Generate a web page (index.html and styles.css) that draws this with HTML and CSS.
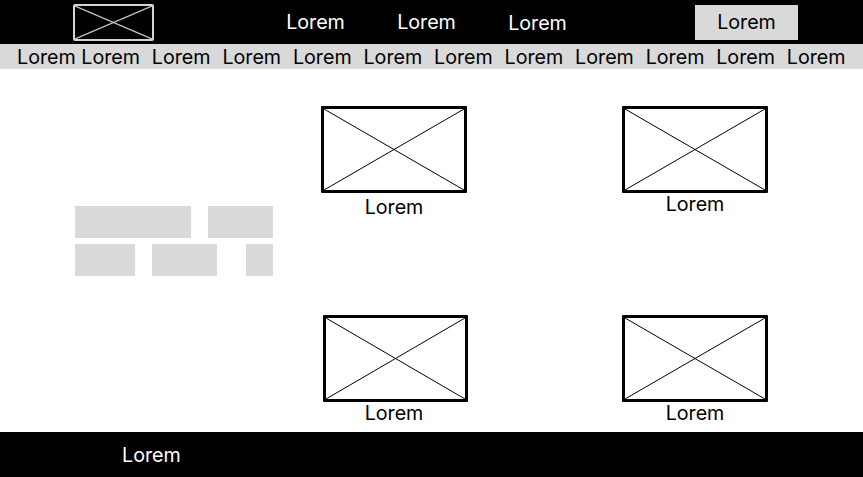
FILE: index.html
```html
<!DOCTYPE html>
<html lang="en">
<head>
<meta charset="utf-8">
<title>Wireframe</title>
<link rel="stylesheet" href="styles.css">
</head>
<body>
<div class="page">
  <header class="topbar">
    <div class="logo">
      <svg class="xsvg" viewBox="0 0 100 100" preserveAspectRatio="none"><line x1="0" y1="0" x2="100" y2="100"/><line x1="100" y1="0" x2="0" y2="100"/></svg>
    </div>
    <nav class="nav">
      <a class="nav-item">Lorem</a>
      <a class="nav-item">Lorem</a>
      <a class="nav-item">Lorem</a>
    </nav>
    <a class="nav-btn">Lorem</a>
  </header>
  <div class="subnav">
    <span>Lorem Lorem</span>
    <span>Lorem</span>
    <span>Lorem</span>
    <span>Lorem</span>
    <span>Lorem</span>
    <span>Lorem</span>
    <span>Lorem</span>
    <span>Lorem</span>
    <span>Lorem</span>
    <span>Lorem</span>
    <span>Lorem</span>
  </div>
  <main class="main">
    <div class="filters">
      <div class="chip-row">
        <span class="chip chip-a"></span>
        <span class="chip chip-b"></span>
      </div>
      <div class="chip-row">
        <span class="chip chip-c"></span>
        <span class="chip chip-d"></span>
        <span class="chip chip-e"></span>
      </div>
    </div>
    <div class="cards">
      <div class="card">
        <div class="thumb"><svg class="xsvg" viewBox="0 0 100 100" preserveAspectRatio="none"><line x1="0" y1="0" x2="100" y2="100"/><line x1="100" y1="0" x2="0" y2="100"/></svg></div>
        <div class="caption caption-low">Lorem</div>
      </div>
      <div class="card">
        <div class="thumb"><svg class="xsvg" viewBox="0 0 100 100" preserveAspectRatio="none"><line x1="0" y1="0" x2="100" y2="100"/><line x1="100" y1="0" x2="0" y2="100"/></svg></div>
        <div class="caption caption-high">Lorem</div>
      </div>
      <div class="card card-shift">
        <div class="thumb"><svg class="xsvg" viewBox="0 0 100 100" preserveAspectRatio="none"><line x1="0" y1="0" x2="100" y2="100"/><line x1="100" y1="0" x2="0" y2="100"/></svg></div>
        <div class="caption caption-high">Lorem</div>
      </div>
      <div class="card">
        <div class="thumb"><svg class="xsvg" viewBox="0 0 100 100" preserveAspectRatio="none"><line x1="0" y1="0" x2="100" y2="100"/><line x1="100" y1="0" x2="0" y2="100"/></svg></div>
        <div class="caption caption-high">Lorem</div>
      </div>
    </div>
  </main>
  <footer class="footer">Lorem</footer>
</div>
</body>
</html>
```
FILE: styles.css
```css
* { box-sizing: border-box; }
html, body { margin: 0; padding: 0; }
body {
  width: 863px;
  height: 477px;
  overflow: hidden;
  background: #fff;
  font-family: Inter, "Liberation Sans", Arial, sans-serif;
  font-size: 19.7px;
  color: #000;
}
.page { display: flex; flex-direction: column; height: 477px; }

.topbar {
  height: 44px;
  background: #000;
  display: flex;
  align-items: flex-start;
  padding-left: 73px;
}
.logo {
  width: 81px;
  height: 37px;
  margin-top: 4px;
  border: 2px solid #d4d4d4;
  border-radius: 2px;
}
.logo .xsvg line { stroke: #c8c8c8; stroke-width: 1.2; }
.xsvg { display: block; width: 100%; height: 100%; }
.xsvg line { vector-effect: non-scaling-stroke; stroke: #000; stroke-width: 1; }

.nav { display: flex; margin-left: 106px; }
.nav-item {
  width: 111px;
  text-align: center;
  color: #fff;
  line-height: 24px;
  padding-top: 10px;
}
.nav-item:last-child { padding-top: 11px; }
.nav-btn {
  margin-left: 102px;
  margin-top: 5px;
  width: 103px;
  height: 35px;
  background: #d9d9d9;
  color: #000;
  text-align: center;
  line-height: 34px;
}

.subnav {
  height: 25px;
  background: #d9d9d9;
  display: flex;
  gap: 11.8px;
  padding-left: 17px;
  padding-top: 1px;
  line-height: 25px;
  white-space: nowrap;
  overflow: hidden;
}

.main {
  height: 363px;
  display: flex;
}
.filters {
  margin-left: 75px;
  padding-top: 137px;
  width: 198px;
  display: flex;
  flex-direction: column;
  gap: 6px;
}
.chip-row { display: flex; justify-content: space-between; }
.chip { display: block; height: 32px; background: #d9d9d9; }
.chip-a { width: 116px; }
.chip-b { width: 65px; }
.chip-c { width: 60px; }
.chip-d { width: 65px; margin-left: 17px; }
.chip-e { width: 27px; margin-left: auto; }
.chip-row:first-child .chip-b { margin-left: auto; }

.cards {
  margin-left: 48px;
  padding-top: 37px;
  display: grid;
  grid-template-columns: 146px 146px;
  column-gap: 155px;
  row-gap: 96px;
  align-content: start;
}
.card { display: flex; flex-direction: column; }
.card-shift { margin-left: 2px; }
.thumb {
  width: 146px;
  height: 87px;
  border: 3px solid #000;
  border-radius: 1px;
}
.card-shift .thumb { width: 145px; }
.caption {
  text-align: center;
  line-height: 24px;
}
.card-shift .caption { padding-right: 2px; }
.caption-low { margin-top: 2px; }
.caption-high { margin-top: -1px; }

.footer {
  height: 45px;
  background: #000;
  color: #fff;
  padding-left: 122px;
  padding-top: 1px;
  line-height: 45px;
}
```
